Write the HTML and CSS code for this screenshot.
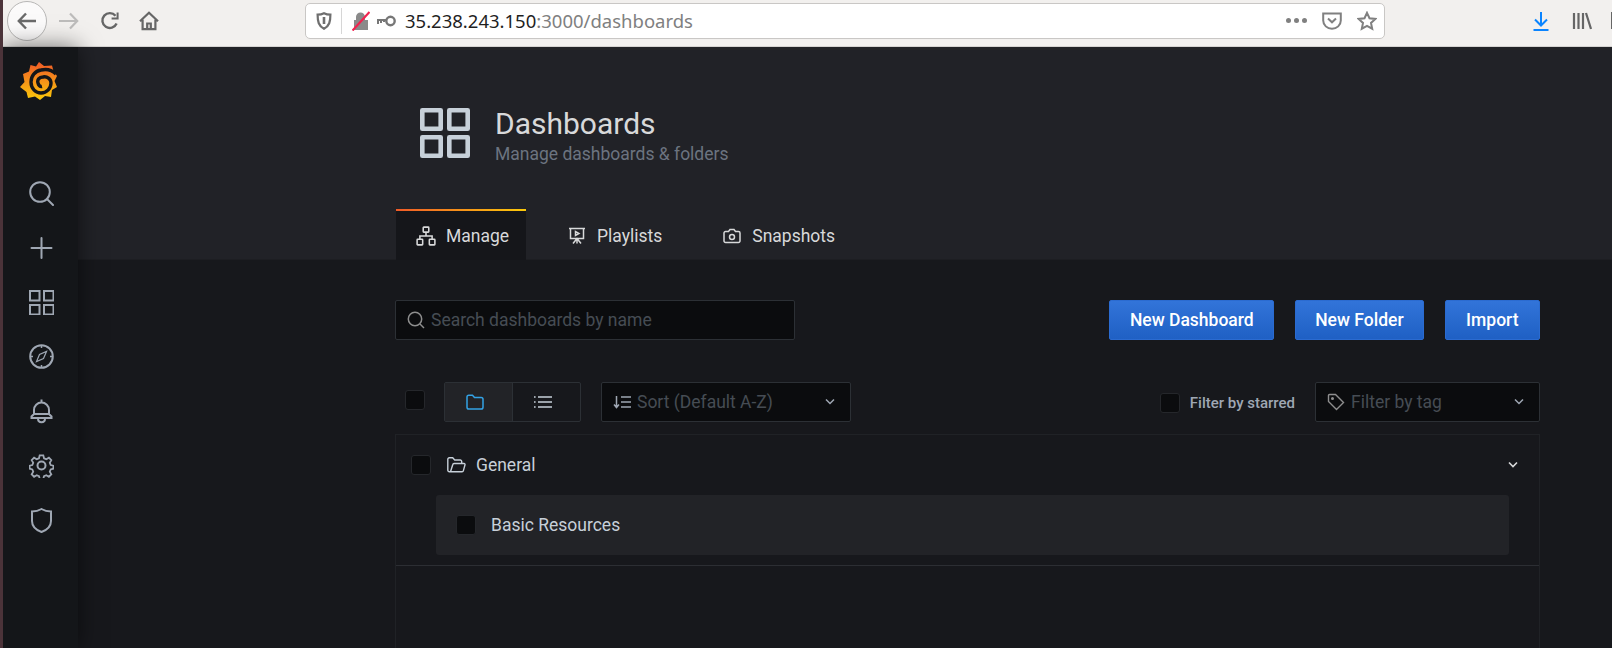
FILE: index.html
```html
<!DOCTYPE html>
<html lang="en">
<head>
    <meta charset="UTF-8">
    <title>Dashboards - Grafana</title>
    <link rel="stylesheet" href="styles.css">
</head>
<body>
    <div class="browser-bar">
        <div class="back-btn">
            <svg width="22" height="22" viewBox="0 0 22 22" fill="none" stroke="#6a6a6a" stroke-width="2.4"><path d="M20 11H3M10 3.5 2.8 11l7.2 7.5"/></svg>
        </div>
        <svg class="forward" width="22" height="22" viewBox="0 0 22 22" fill="none" stroke="#bdbcbb" stroke-width="2.2"><path d="M1 11h18M12 3.5l7.2 7.5-7.2 7.5"/></svg>
        <svg class="reload" width="20" height="20" viewBox="0 0 20 20" fill="none" stroke="#666" stroke-width="2.4"><path d="M16.6 12.5A7.4 7.4 0 1 1 15.5 4.8"/><path d="M17.6 1.5v6h-6" stroke-width="2"/></svg>
        <svg class="home" width="20" height="20" viewBox="0 0 20 20" fill="none" stroke="#666" stroke-width="2.2"><path d="M1 10.2 10 1.8l9 8.4M3.6 8.8v9.4h12.8V8.8M8.2 18v-5.5h3.6V18"/></svg>
        <div class="url-bar">
            <svg class="url-shield" width="16" height="18" viewBox="0 0 16 18" fill="none" stroke="#6f6f6f" stroke-width="2.2"><path d="M8 1.2c2 1 4 1.4 6.400 1.400 0 7-1 11.400-6.400 14.200C2.600 14 1.600 9.600 1.600 2.600 4 2.600 6 2.200 8 1.200Z"/><path d="M8 5v7" stroke-width="2.600"/></svg>
            <span class="url-sep"></span>
            <svg class="url-lock" width="18" height="20" viewBox="0 0 18 20"><path d="M2 9h2V6a4.500 4.500 0 0 1 9 0v3h3v10H2Z" fill="#8a8a8a"/><path d="M0.500 19.500 17.500 1" stroke="#f2224f" stroke-width="2.200"/></svg>
            <svg class="url-key" width="20" height="12" viewBox="0 0 20 12" fill="none" stroke="#777"><circle cx="14.500" cy="6" r="4.200" stroke-width="2.400"/><path d="M10 5H1M2 5v4M5 5v3M8 5v2" stroke-width="2"/></svg>
            <span class="url-text"><span class="url-host">35.238.243.150</span>:3000/dashboards</span>
            <span class="url-dots"><i></i><i></i><i></i></span>
            <svg class="url-pocket" width="20" height="18" viewBox="0 0 20 18" fill="none" stroke="#808080" stroke-width="2"><path d="M1.200 1.500h17.600v7a8.800 8.300 0 0 1-17.600 0Z"/><path d="M6 6.500l4 3.800 4-3.800"/></svg>
            <svg class="url-star" width="20" height="20" viewBox="0 0 20 20" fill="none" stroke="#808080" stroke-width="2"><path d="m10 1.800 2.500 5.400 5.900.7-4.400 4 1.200 5.800-5.200-2.900-5.200 2.900 1.200-5.800-4.400-4 5.900-.7Z"/></svg>
        </div>
        <svg class="download" width="16" height="20" viewBox="0 0 16 20" fill="none" stroke="#0a84ff" stroke-width="2"><path d="M8 1v13M2 8.500 8 14.500l6-6M0.500 19h15"/></svg>
        <svg class="library" width="20" height="18" viewBox="0 0 20 18" fill="none" stroke="#666" stroke-width="2.200"><path d="M2 1v16M6.500 1v16M11 1v16M14 1l5 16"/></svg>
        <span class="cut-icon"></span>
    </div>

    <div class="app">
        <nav class="sidemenu">
            <svg class="logo" width="37" height="38" viewBox="0 0 37 38">
                <defs>
                    <linearGradient id="logoGrad" x1="0" y1="0" x2="0" y2="1">
                        <stop offset="0" stop-color="#f05a28"/>
                        <stop offset="1" stop-color="#fbca0a"/>
                    </linearGradient>
                </defs>
                <path fill="url(#logoGrad)" d="M19 0 24 4 32 3.500 33.500 9 37 14 34.500 19 37 25 32 28 31 35 25 34 20 38 15 34.500 8 36 6.500 30 0 25 4.500 20 3 12 9 9.500 10.500 3 16 4.500Z"/>
                <path fill="none" stroke="#141619" stroke-width="3.400" d="M36 12C31 7 25 7 21 8 15 9 11 14 11 20 11 27 16 31 21 31 27 31 31 26 31 21 31 17 27 14 23 15 19 15 17 18 18 21 18.500 23 20 25 22 24.500"/>
            </svg>
            <div class="side-items">
                <div class="side-item"><svg width="25" height="25" viewBox="0 0 25 25" fill="none" stroke="#9fa7b3" stroke-width="2"><circle cx="11" cy="11" r="9.800"/><path d="m18 18 6 6" stroke-linecap="round"/></svg></div>
                <div class="side-item"><svg width="25" height="25" viewBox="0 0 25 25" fill="none" stroke="#9fa7b3" stroke-width="2"><path d="M12.500 3v20M2.500 13h20" stroke-linecap="round"/></svg></div>
                <div class="side-item"><svg width="25" height="25" viewBox="0 0 25 25" fill="none" stroke="#9fa7b3" stroke-width="2"><rect x="1" y="1" width="9.500" height="9.500"/><rect x="15" y="1" width="9.500" height="9.500"/><rect x="1" y="15" width="9.500" height="9.500"/><rect x="15" y="15" width="9.500" height="9.500"/></svg></div>
                <div class="side-item"><svg width="25" height="25" viewBox="0 0 25 25" fill="none" stroke="#9fa7b3" stroke-width="2"><circle cx="12.500" cy="12.500" r="11.300"/><path d="M17.500 7.500 14.500 14.500l-7 3L10.500 10.500Z" stroke-width="1.200"/><path d="M12.500 2v2M12.500 21v2M2 12.500h2M21 12.500h2" stroke-width="1.500"/></svg></div>
                <div class="side-item"><svg width="25" height="25" viewBox="0 0 25 25" fill="none" stroke="#9fa7b3" stroke-width="2"><path d="M12.500 0.500v3M5 15V11a7.500 7.500 0 0 1 15 0v4M2.500 19v-1.500L5 15h15l2.500 2.500V19ZM9 19.500c0 5 7 5 7 0" /></svg></div>
                <div class="side-item"><svg width="25" height="25" viewBox="0 0 25 25" fill="none" stroke="#9fa7b3" stroke-width="2"><circle cx="12.500" cy="12.500" r="4"/><path d="m10.500 1.200h4l.8 3.300 2.500 1 2.900-1.700 2.700 2.800-1.700 2.900 1 2.500 3 .7v0 3.400l-3 .8-1 2.500 1.700 2.900-2.700 2.700-2.900-1.700-2.500 1-.8 3h-4l-.8-3-2.500-1-2.900 1.700-2.700-2.700 1.700-2.900-1-2.500-3-.8v-3.400l3-.7 1-2.500-1.700-2.900 2.700-2.800 2.900 1.700 2.500-1Z" transform="translate(1.250 1.250) scale(.9)"/></svg></div>
                <div class="side-item"><svg width="25" height="25" viewBox="0 0 25 25" fill="none" stroke="#9fa7b3" stroke-width="2"><path d="M12.500 1c3 1.800 6 2.500 9.500 2.500V13c0 5-4 9-9.500 11C7 22 3 18 3 13V3.500C6.500 3.500 9.500 2.800 12.500 1Z"/></svg></div>
            </div>
        </nav>

        <main class="main">
            <header class="page-header">
                <div class="header-inner">
                    <div class="title-row">
                        <svg class="title-icon" width="50" height="50" viewBox="0 0 50 50" fill="none" stroke="#c7d0d9" stroke-width="4.600" stroke-linejoin="round"><rect x="2.300" y="2.300" width="18.400" height="18.400"/><rect x="29.300" y="2.300" width="18.400" height="18.400"/><rect x="2.300" y="29.300" width="18.400" height="18.400"/><rect x="29.300" y="29.300" width="18.400" height="18.400"/></svg>
                        <div class="title-text">
                            <h1>Dashboards</h1>
                            <div class="subtitle">Manage dashboards &amp; folders</div>
                        </div>
                    </div>
                    <div class="tabs">
                        <a class="tab active">
                            <svg width="20" height="20" viewBox="0 0 18 18" fill="none" stroke="#d8d9da" stroke-width="1.400"><rect x="6.500" y="1" width="5" height="4.500" rx=".5"/><rect x="1" y="12" width="5" height="5" rx=".5"/><rect x="12" y="12" width="5" height="5" rx=".5"/><path d="M9 5.500v3.500M3.500 12V9h11v3"/></svg>
                            Manage
                        </a>
                        <a class="tab">
                            <svg width="18" height="18" viewBox="0 0 18 18" fill="none" stroke="#d8d9da" stroke-width="1.500"><path d="M1 1.500h16M2.500 1.500v10h13v-10M9 11.500v5M5 16.500l4-5 4 5"/><path d="M7.500 4.500v4l3.500-2Z"/></svg>
                            Playlists
                        </a>
                        <a class="tab">
                            <svg width="18" height="18" viewBox="0 0 18 18" fill="none" stroke="#d8d9da" stroke-width="1.500"><path d="M2.500 4.500h3l1.500-2h4l1.500 2h3a1.500 1.500 0 0 1 1.500 1.500v8a1.500 1.500 0 0 1-1.500 1.500h-13A1.500 1.500 0 0 1 1 14V6a1.500 1.500 0 0 1 1.500-1.500Z"/><circle cx="9" cy="10" r="2.500"/></svg>
                            Snapshots
                        </a>
                    </div>
                </div>
            </header>

            <section class="page-body">
                <div class="action-row">
                    <div class="search-box">
                        <svg width="18" height="18" viewBox="0 0 18 18" fill="none" stroke="#8e8e8e" stroke-width="1.500"><circle cx="8" cy="8" r="6.700"/><path d="m13 13 4 4"/></svg>
                        <input type="text" placeholder="Search dashboards by name">
                    </div>
                    <div class="action-buttons">
                        <button class="btn">New Dashboard</button>
                        <button class="btn">New Folder</button>
                        <button class="btn btn-import">Import</button>
                    </div>
                </div>

                <div class="filter-row">
                    <span class="checkbox select-all"></span>
                    <div class="view-toggle">
                        <span class="toggle-btn on">
                            <svg width="18" height="16" viewBox="0 0 18 16" fill="none" stroke="#33a2e5" stroke-width="1.500"><path d="M1 3a1.800 1.800 0 0 1 1.800-1.800h3.700l2 2.300h6.700A1.800 1.800 0 0 1 17 5.300v8a1.800 1.800 0 0 1-1.800 1.800H2.800A1.800 1.800 0 0 1 1 13.300Z"/></svg>
                        </span>
                        <span class="toggle-btn">
                            <svg width="18" height="14" viewBox="0 0 18 14" fill="none" stroke="#c7d0d9" stroke-width="1.600"><path d="M4 2h14M4 7h14M4 12h14M0 2h1.600M0 7h1.600M0 12h1.600"/></svg>
                        </span>
                    </div>
                    <div class="select-box sort-box">
                        <svg width="18" height="14" viewBox="0 0 18 14" fill="none" stroke="#9fa7b3" stroke-width="1.500"><path d="M3.500 1v11M1 9.500l2.500 3 2.500-3M8 2h10M8 7h10M8 12h10"/></svg>
                        <span class="select-label">Sort (Default A-Z)</span>
                        <svg class="chevron" width="12" height="8" viewBox="0 0 12 8" fill="none" stroke="#9fa7b3" stroke-width="1.500"><path d="m2 1.500 4 4 4-4"/></svg>
                    </div>
                    <div class="starred">
                        <span class="checkbox"></span>
                        <span class="starred-label">Filter by starred</span>
                    </div>
                    <div class="select-box tag-box">
                        <svg width="18" height="18" viewBox="0 0 18 18" fill="none" stroke="#8e8e8e" stroke-width="1.400"><path d="M1.500 2.500a1 1 0 0 1 1-1h6l8 8-7 7-8-8Z"/><circle cx="5.500" cy="5.500" r=".8"/></svg>
                        <span class="select-label">Filter by tag</span>
                        <svg class="chevron" width="12" height="8" viewBox="0 0 12 8" fill="none" stroke="#9fa7b3" stroke-width="1.500"><path d="m2 1.500 4 4 4-4"/></svg>
                    </div>
                </div>

                <div class="dash-list">
                    <div class="folder-row">
                        <span class="checkbox"></span>
                        <svg class="folder-open" width="19" height="16" viewBox="0 0 19 16" fill="none" stroke="#c7d0d9" stroke-width="1.400"><path d="M3.500 14.800H2.300A1.500 1.500 0 0 1 .8 13.300V2.300A1.500 1.500 0 0 1 2.300.8h3.400l2 2.200h5.500a1.500 1.500 0 0 1 1.500 1.500V6.500M3.500 14.800 5.800 7.500a1.300 1.300 0 0 1 1.200-1h10a1 1 0 0 1 1 1.300l-1.600 5.800a1.500 1.500 0 0 1-1.400 1.200Z"/></svg>
                        <span class="folder-name">General</span>
                        <svg class="folder-chevron" width="12" height="8" viewBox="0 0 12 8" fill="none" stroke="#d8d9da" stroke-width="1.600"><path d="m2 1.500 4 4 4-4"/></svg>
                    </div>
                    <div class="dash-item">
                        <span class="checkbox"></span>
                        <span class="dash-name">Basic Resources</span>
                    </div>
                    <div class="list-divider"></div>
                </div>
            </section>
        </main>
    </div>
</body>
</html>
```

FILE: styles.css
```css
html, body {
    margin: 0;
    height: 100%;
}

body {
    height: 648px;
    overflow: hidden;
    display: flex;
    flex-direction: column;
    border-left: 3px solid #4b3339;
    box-sizing: border-box;
    font-family: Roboto, sans-serif;
    background-color: #17181c;
}

/* browser toolbar */
.browser-bar {
    height: 47px;
    flex: none;
    box-sizing: border-box;
    display: flex;
    align-items: center;
    background-color: #f2f0ee;
    border-bottom: 1px solid #d5d3d1;
    padding-bottom: 5px;
    overflow: hidden;
}

.back-btn {
    width: 40px;
    height: 40px;
    margin-left: 4px;
    flex: none;
    display: flex;
    align-items: center;
    justify-content: center;
    background-color: #fbfafa;
    border: 1px solid #b8b7b6;
    border-radius: 50%;
    box-sizing: border-box;
}

.forward { margin-left: 11px; flex: none; }
.reload { margin-left: 20px; flex: none; }
.home { margin-left: 19px; flex: none; }

.url-bar {
    width: 1080px;
    height: 36px;
    margin-left: 146px;
    flex: none;
    box-sizing: border-box;
    display: flex;
    align-items: center;
    background-color: #fff;
    border: 1px solid #c9c7c5;
    border-radius: 5px;
}

.url-shield { margin-left: 10px; flex: none; }
.url-sep { width: 1px; height: 26px; margin-left: 9px; background-color: #d6d6d6; }
.url-lock { margin-left: 10px; flex: none; }
.url-key { margin-left: 6px; flex: none; }

.url-text {
    margin-left: 9px;
    font-family: "Noto Sans", sans-serif;
    font-size: 18.5px;
    color: #808080;
    white-space: nowrap;
}

.url-host { color: #1f1f1f; }

.url-dots {
    margin-left: auto;
    display: flex;
    gap: 3px;
}

.url-dots i {
    width: 5px;
    height: 5px;
    border-radius: 50%;
    background-color: #808080;
}

.url-pocket { margin-left: 15px; flex: none; }
.url-star { margin-left: 15px; margin-right: 7px; flex: none; }
.download { margin-left: 148px; flex: none; }
.library { margin-left: 23px; flex: none; }

.cut-icon {
    width: 2px;
    height: 17px;
    margin-left: 19px;
    flex: none;
    background-color: #666;
}

/* app */
.app {
    flex: 1;
    min-height: 0;
    display: flex;
}

.sidemenu {
    width: 75px;
    flex: none;
    box-sizing: border-box;
    padding-top: 15px;
    background-color: #141619;
    box-shadow: 0 0 22px rgba(0, 0, 0, 0.55);
    position: relative;
    z-index: 1;
}

.logo {
    display: block;
    margin-left: 17px;
}

.side-items {
    margin-top: 66px;
}

.side-item {
    height: 54.5px;
    display: flex;
    align-items: center;
    padding-left: 26px;
}

.main {
    flex: 1;
    min-width: 0;
    display: flex;
    flex-direction: column;
}

.page-header {
    height: 213px;
    flex: none;
    box-sizing: border-box;
    background-color: #212227;
    border-bottom: 1px solid #1d1e22;
}

.header-inner {
    padding: 61px 0 0 318px;
}

.title-row {
    height: 54px;
    display: flex;
    align-items: flex-start;
    margin-left: 24px;
}

.title-icon { flex: none; }

.title-text {
    margin-left: 25px;
}

h1 {
    margin: -2px 0 0;
    font-size: 30px;
    font-weight: 400;
    line-height: 35px;
    color: #d8d9da;
}

.subtitle {
    font-size: 17.5px;
    line-height: 21px;
    margin-top: 3px;
    color: #6c7480;
}

.tabs {
    display: flex;
    margin-top: 47px;
}

.tab {
    height: 51px;
    box-sizing: border-box;
    display: flex;
    align-items: center;
    gap: 11px;
    padding: 2px 20px 0;
    font-size: 17.5px;
    color: #d8d9da;
    margin-right: 21px;
}

.tab svg { flex: none; }

.tab.active {
    width: 130px;
    gap: 10px;
    background-color: #15161a;
    border-top: 2px solid;
    border-image: linear-gradient(90deg, #f05a28, #fbca0a) 1;
    border-left: 0;
    border-right: 0;
    border-bottom: 0;
    padding: 0 0 0 20px;
    margin-right: 22px;
}

.page-body {
    flex: 1;
    min-height: 0;
    box-sizing: border-box;
    display: flex;
    flex-direction: column;
    width: 1145px;
    margin-left: 317px;
    padding-top: 40px;
    background-color: #17181c;
}

.action-row {
    display: flex;
    justify-content: space-between;
    flex: none;
}

.search-box {
    width: 400px;
    height: 40px;
    box-sizing: border-box;
    display: flex;
    align-items: center;
    gap: 6px;
    padding-left: 11px;
    background-color: #0b0c0e;
    border: 1px solid #2c3035;
    border-radius: 2px;
}

.search-box svg { flex: none; }

.search-box input {
    flex: 1;
    min-width: 0;
    padding: 0;
    border: 0;
    outline: none;
    background: none;
    font-family: inherit;
    font-size: 17.5px;
    color: #d8d9da;
}

.search-box input::placeholder {
    color: #464c54;
    opacity: 1;
}

.action-buttons {
    display: flex;
    gap: 20.5px;
}

.btn {
    height: 40px;
    padding: 0 19.5px;
    font-family: inherit;
    font-size: 17.5px;
    font-weight: 500;
    color: #fff;
    background: linear-gradient(180deg, #3274d9, #1f60c4);
    border: 1px solid #2b6bd0;
    border-radius: 2px;
}

.btn-import {
    padding: 0 20.5px;
}

.filter-row {
    display: flex;
    align-items: flex-start;
    flex: none;
    margin-top: 42px;
}

.checkbox {
    width: 20px;
    height: 20px;
    flex: none;
    box-sizing: border-box;
    display: block;
    background-color: #0b0c0e;
    border: 1px solid #25272b;
    border-radius: 3px;
}

.select-all {
    margin: 8px 0 0 10px;
}

.view-toggle {
    width: 137px;
    height: 40px;
    margin-left: 19px;
    box-sizing: border-box;
    display: flex;
    border: 1px solid #2c3035;
    border-radius: 2px;
}

.toggle-btn {
    flex: 1;
    display: flex;
    align-items: center;
    justify-content: center;
    padding-right: 8px;
}

.toggle-btn.on {
    flex: none;
    box-sizing: border-box;
    width: 68px;
    padding-right: 7px;
    background-color: #222327;
    border-right: 1px solid #2c3035;
}

.select-box {
    height: 40px;
    box-sizing: border-box;
    display: flex;
    align-items: center;
    padding: 0 14px 0 11px;
    background-color: #0b0c0e;
    border: 1px solid #2c3035;
    border-radius: 2px;
    font-size: 17.5px;
    color: #464c54;
}

.sort-box {
    width: 250px;
    margin-left: 20px;
    gap: 6px;
}

.tag-box {
    width: 225px;
    margin-left: 20px;
    gap: 6px;
}

.select-label { flex: 1; }

.starred {
    display: flex;
    align-items: center;
    gap: 10px;
    margin: 11px 0 0 auto;
}

.starred-label {
    font-size: 15px;
    font-weight: 500;
    color: #9fa7b3;
}

.dash-list {
    flex: 1;
    margin-top: 12px;
    border: 1px solid #202226;
    border-bottom: 0;
}

.folder-row {
    height: 60px;
    box-sizing: border-box;
    display: flex;
    align-items: center;
    padding: 0 20px 0 15px;
}

.folder-open { margin-left: 16px; }

.folder-name {
    margin-left: 10px;
    font-size: 17.5px;
    color: #c7d0d9;
}

.folder-chevron { margin-left: auto; }

.dash-item {
    height: 60px;
    margin: 0 30px 0 40px;
    box-sizing: border-box;
    display: flex;
    align-items: center;
    padding-left: 20px;
    background-color: #222327;
    border-radius: 3px;
}

.dash-name {
    margin-left: 15px;
    font-size: 17.5px;
    color: #c7d0d9;
}

.list-divider {
    margin-top: 10px;
    border-top: 1px solid #2c2e33;
}
```
